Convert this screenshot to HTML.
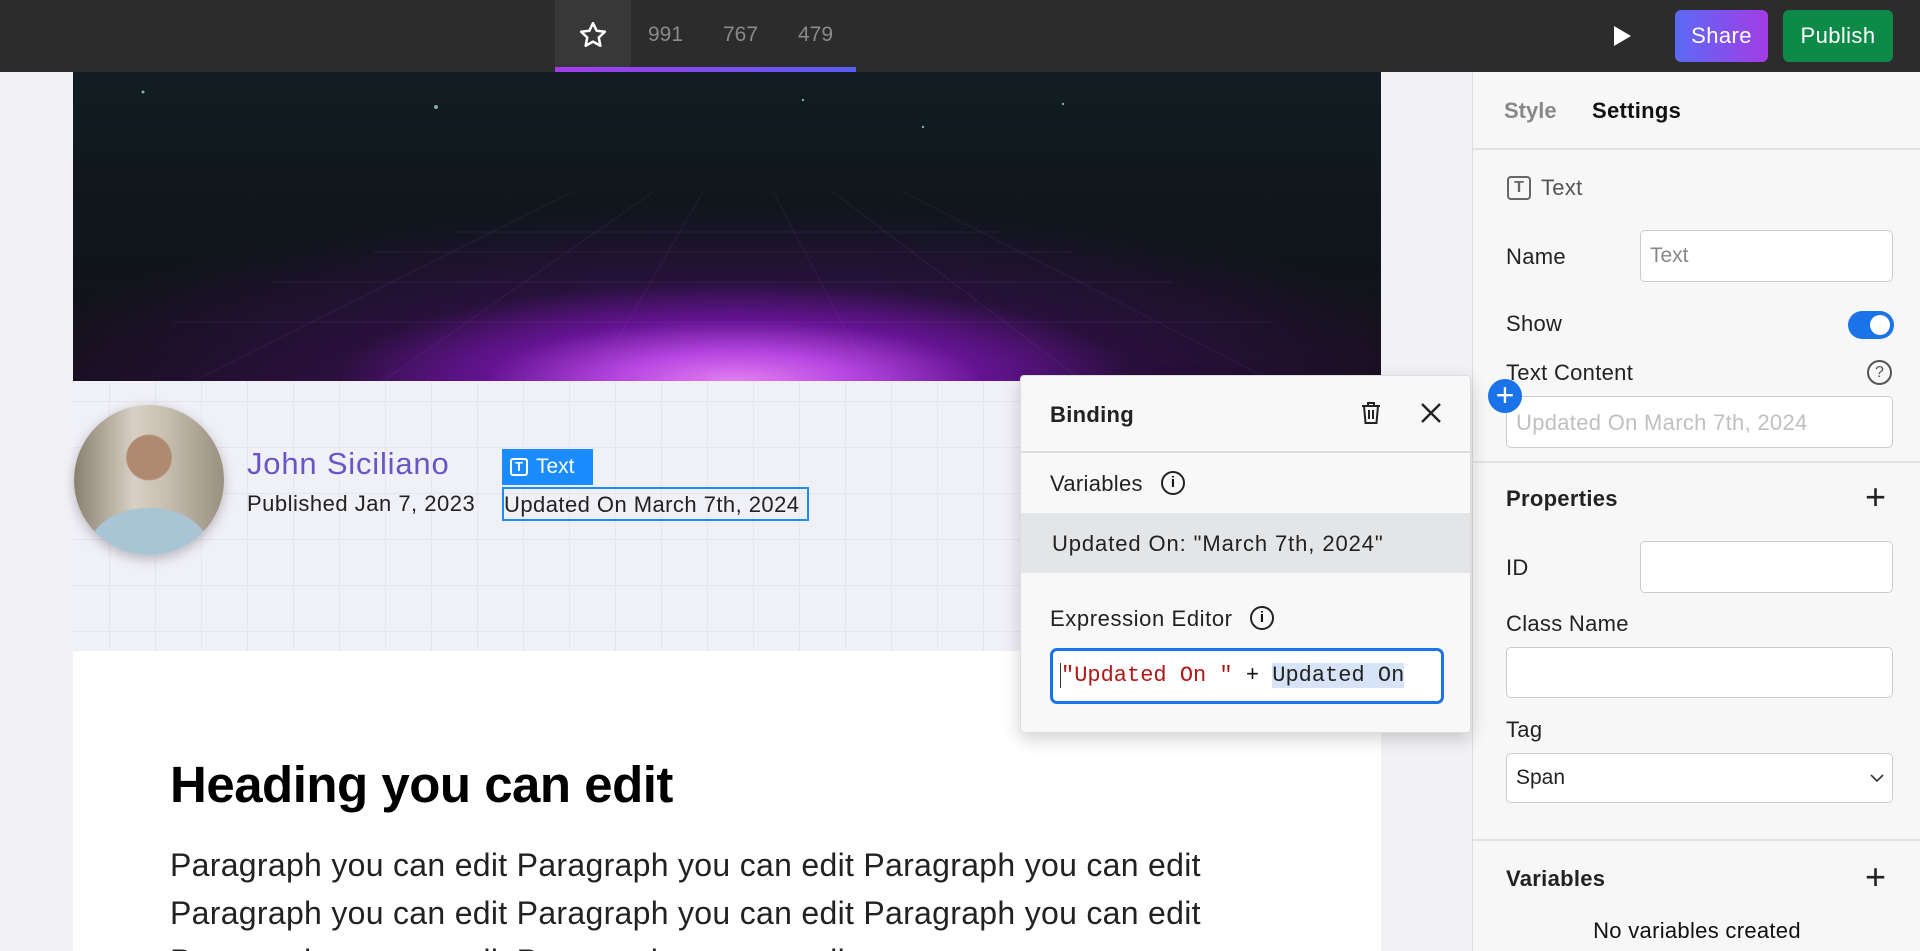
<!DOCTYPE html>
<html><head><meta charset="utf-8"><style>
*{box-sizing:border-box;margin:0;padding:0}
html{width:1920px;height:951px;overflow:hidden}
body{width:1920px;height:951px;overflow:hidden;background:#f2f2f6;font-family:"Liberation Sans",sans-serif;color:#111;position:relative}
.abs{position:absolute}
#top{left:0;top:0;width:1920px;height:72px;background:#2c2c2c}
.num{color:#8a8a8a;font-size:21px;top:23px}
.btn{top:10px;height:52px;border-radius:6px;color:#fff;font-size:22px;display:flex;align-items:center;justify-content:center;letter-spacing:.4px}
#hero{left:73px;top:72px;width:1308px;height:309px;overflow:hidden;
background:radial-gradient(ellipse 400px 100px at 662px 310px,#e480f2 0%,#b545e0 30%,rgba(110,20,160,.8) 62%,rgba(60,10,90,0) 100%),
radial-gradient(ellipse 760px 190px at 662px 320px,rgba(100,20,150,.9) 0%,rgba(60,15,90,.6) 50%,rgba(20,20,30,0) 100%),
linear-gradient(#111d22,#0f161b 50%,#141018)}
#grid{left:73px;top:381px;width:1308px;height:270px;background-color:#f0f0f7;
background-image:linear-gradient(#e6e6f2 1px,transparent 1px),linear-gradient(90deg,#e6e6f2 1px,transparent 1px);background-size:46px 46px;background-position:-10px 20px}
#white{left:73px;top:651px;width:1308px;height:300px;background:#fff}
#panel{left:1472px;top:72px;width:448px;height:879px;background:#f7f7f7;border-left:1px solid #ddd}
.lbl{font-size:22px;color:#222;letter-spacing:.3px}
.inp{background:#fff;border:1px solid #ccc;border-radius:5px}
.hr{height:2px;background:#e2e2e2}
#pop{left:1020px;top:375px;width:451px;height:358px;background:#f8f8f8;border:1px solid #ddd;border-radius:4px;box-shadow:0 6px 18px rgba(0,0,0,.18)}
</style></head><body>
<div id="top" class="abs">
 <div class="abs" style="left:555px;top:0;width:76px;height:67px;background:#383838"></div>
 <svg class="abs" style="left:578px;top:20px" width="30" height="30" viewBox="0 0 24 24"><path d="M12 2.5l2.9 6.1 6.6.8-4.9 4.6 1.3 6.6L12 17.3 6.1 20.6l1.3-6.6L2.5 9.4l6.6-.8z" fill="none" stroke="#fff" stroke-width="2" stroke-linejoin="round"/></svg>
 <div class="abs" style="left:555px;top:67px;width:301px;height:5px;background:linear-gradient(90deg,#a43cf0,#5a5cf0)"></div>
 <div class="abs num" style="left:648px">991</div>
 <div class="abs num" style="left:723px">767</div>
 <div class="abs num" style="left:798px">479</div>
 <svg class="abs" style="left:1612px;top:25px" width="20" height="22" viewBox="0 0 20 22"><path d="M2 1L19 11 2 21z" fill="#fff"/></svg>
 <div class="abs btn" style="left:1675px;width:93px;background:linear-gradient(90deg,#5b6af5,#a33ce6)">Share</div>
 <div class="abs btn" style="left:1783px;width:110px;background:#0e8a48">Publish</div>
</div>
<div id="hero" class="abs">
 <svg width="1308" height="309" style="position:absolute;left:0;top:0"><g stroke="rgba(200,120,255,.08)" stroke-width="1.2" fill="none">
 <path d="M120 309L500 120M310 309L580 120M520 309L630 120M800 309L700 120M1010 309L760 120M1200 309L830 120"/>
 <path d="M100 250H1200M200 210H1100M300 180H1000M380 160H930"/></g>
 <g fill="#8aa"><circle cx="70" cy="20" r="1.5"/><circle cx="363" cy="35" r="2"/><circle cx="730" cy="28" r="1.2"/><circle cx="850" cy="55" r="1.2"/><circle cx="990" cy="32" r="1.2"/></g></svg>
</div>
<div id="grid" class="abs"></div>
<div id="white" class="abs"></div>
<div class="abs" style="left:74px;top:405px;width:150px;height:150px;border-radius:50%;background:radial-gradient(circle at 50% 35%,#b08a70 0 18%,transparent 19%),radial-gradient(ellipse 60px 40px at 50% 95%,#a9c4d4 0 98%,transparent 100%),linear-gradient(90deg,#8a8070,#d8d0c4 40%,#c8c0b0 60%,#9a9080);box-shadow:0 4px 12px rgba(0,0,0,.25)"></div>
<div class="abs" style="left:247px;top:446px;font-size:31px;color:#6a55c4;letter-spacing:.8px">John Siciliano</div>
<div class="abs" style="left:247px;top:491px;font-size:22px;color:#222;letter-spacing:.5px">Published Jan 7, 2023</div>
<div class="abs" style="left:502px;top:449px;width:91px;height:36px;background:#1a8cff;color:#fff;font-size:21px;display:flex;align-items:center;padding-left:8px"><span style="display:inline-block;width:18px;height:18px;border:2px solid #fff;border-radius:3px;font-size:13px;line-height:14px;text-align:center;font-weight:bold;margin-right:8px">T</span>Text</div>
<div class="abs" style="left:502px;top:487px;width:307px;height:34px;border:2px solid #1a8cff;font-size:22px;color:#222;padding:3px 0 0 0;white-space:nowrap;letter-spacing:.45px;overflow:hidden">Updated On March 7th, 2024</div>
<div class="abs" style="left:170px;top:755px;font-size:51px;font-weight:bold;color:#000;letter-spacing:-.5px">Heading you can edit</div>
<div class="abs" style="left:170px;top:841px;font-size:32px;line-height:48px;color:#222;width:1200px;letter-spacing:.3px">Paragraph you can edit Paragraph you can edit Paragraph you can edit<br>Paragraph you can edit Paragraph you can edit Paragraph you can edit<br>Paragraph you can edit Paragraph you can edit</div>

<div id="panel" class="abs">
 <div class="abs" style="left:31px;top:26px;font-size:22px;font-weight:bold;color:#888">Style</div>
 <div class="abs" style="left:119px;top:26px;font-size:22px;font-weight:bold;color:#111;letter-spacing:.3px">Settings</div>
 <div class="abs hr" style="left:0;top:76px;width:448px"></div>
 <div class="abs" style="left:34px;top:104px;width:24px;height:24px;border:2px solid #666;border-radius:4px;font-size:16px;font-weight:bold;color:#666;text-align:center;line-height:20px">T</div>
 <div class="abs lbl" style="left:68px;top:103px;color:#555">Text</div>
 <div class="abs lbl" style="left:33px;top:172px">Name</div>
 <div class="abs inp" style="left:167px;top:158px;width:253px;height:52px;font-size:21px;color:#888;padding:13px 9px">Text</div>
 <div class="abs lbl" style="left:33px;top:239px">Show</div>
 <div class="abs" style="left:375px;top:239px;width:46px;height:28px;border-radius:14px;background:#1a73e8"><div style="position:absolute;right:4px;top:4px;width:20px;height:20px;border-radius:50%;background:#fff"></div></div>
 <div class="abs lbl" style="left:33px;top:288px">Text Content</div>
 <div class="abs" style="left:394px;top:288px;width:25px;height:25px;border:2px solid #555;border-radius:50%;font-size:16px;text-align:center;line-height:21px;color:#555">?</div>
 <div class="abs inp" style="left:33px;top:324px;width:387px;height:52px;font-size:22px;color:#c0c0c0;padding:13px 9px;letter-spacing:.3px">Updated On March 7th, 2024</div>
 <div class="abs" style="left:15px;top:307px;width:34px;height:34px;border-radius:50%;background:#1a73e8;color:#fff;font-size:32px;line-height:32px;text-align:center">+</div>
 <div class="abs hr" style="left:0;top:389px;width:448px"></div>
 <div class="abs lbl" style="left:33px;top:414px;font-weight:bold">Properties</div>
 <div class="abs" style="left:392px;top:404px;font-size:36px;color:#222;font-weight:300">+</div>
 <div class="abs lbl" style="left:33px;top:483px">ID</div>
 <div class="abs inp" style="left:167px;top:469px;width:253px;height:52px"></div>
 <div class="abs lbl" style="left:33px;top:539px">Class Name</div>
 <div class="abs inp" style="left:33px;top:575px;width:387px;height:51px"></div>
 <div class="abs lbl" style="left:33px;top:645px">Tag</div>
 <div class="abs inp" style="left:33px;top:681px;width:387px;height:50px;font-size:21px;padding:12px 9px;color:#222">Span</div>
 <svg class="abs" style="left:396px;top:700px" width="16" height="12"><path d="M2 3l6 6 6-6" fill="none" stroke="#333" stroke-width="1.6"/></svg>
 <div class="abs hr" style="left:0;top:767px;width:448px"></div>
 <div class="abs lbl" style="left:33px;top:794px;font-weight:bold">Variables</div>
 <div class="abs" style="left:392px;top:784px;font-size:36px;color:#222">+</div>
 <div class="abs lbl" style="left:0;width:448px;text-align:center;top:846px;color:#111">No variables created</div>
</div>

<div id="pop" class="abs">
 <div class="abs lbl" style="left:29px;top:26px;font-weight:bold">Binding</div>
 <svg class="abs" style="left:338px;top:24px" width="24" height="26" viewBox="0 0 24 26"><path d="M3 6h18M9 6V3h6v3M5 6l1.5 17h11L19 6M10 10v9M14 10v9" fill="none" stroke="#222" stroke-width="2"/></svg>
 <svg class="abs" style="left:399px;top:26px" width="22" height="22"><path d="M2 2l18 18M20 2L2 20" stroke="#222" stroke-width="2.4"/></svg>
 <div class="abs hr" style="left:0;top:75px;width:449px;background:#ddd"></div>
 <div class="abs lbl" style="left:29px;top:95px">Variables</div>
 <div class="abs" style="left:140px;top:95px;width:24px;height:24px;border:2px solid #222;border-radius:50%;font-size:15px;text-align:center;line-height:20px;font-weight:bold">i</div>
 <div class="abs" style="left:0;top:137px;width:449px;height:60px;background:#e3e5e7"></div>
 <div class="abs lbl" style="left:31px;top:155px;letter-spacing:.9px">Updated On: "March 7th, 2024"</div>
 <div class="abs lbl" style="left:29px;top:230px;letter-spacing:.6px">Expression Editor</div>
 <div class="abs" style="left:229px;top:230px;width:24px;height:24px;border:2px solid #222;border-radius:50%;font-size:15px;text-align:center;line-height:20px;font-weight:bold">i</div>
 <div class="abs" style="left:29px;top:272px;width:394px;height:56px;border:3px solid #1a73e8;border-radius:7px;background:#fff;font-family:'Liberation Mono',monospace;font-size:22px;padding:12px 7px;white-space:nowrap;overflow:hidden"><span style="border-left:1px solid #333;color:#b01818">"Updated On "</span> + <span style="background:#d7e4f7;color:#222">Updated On</span></div>
</div>
</body></html>
